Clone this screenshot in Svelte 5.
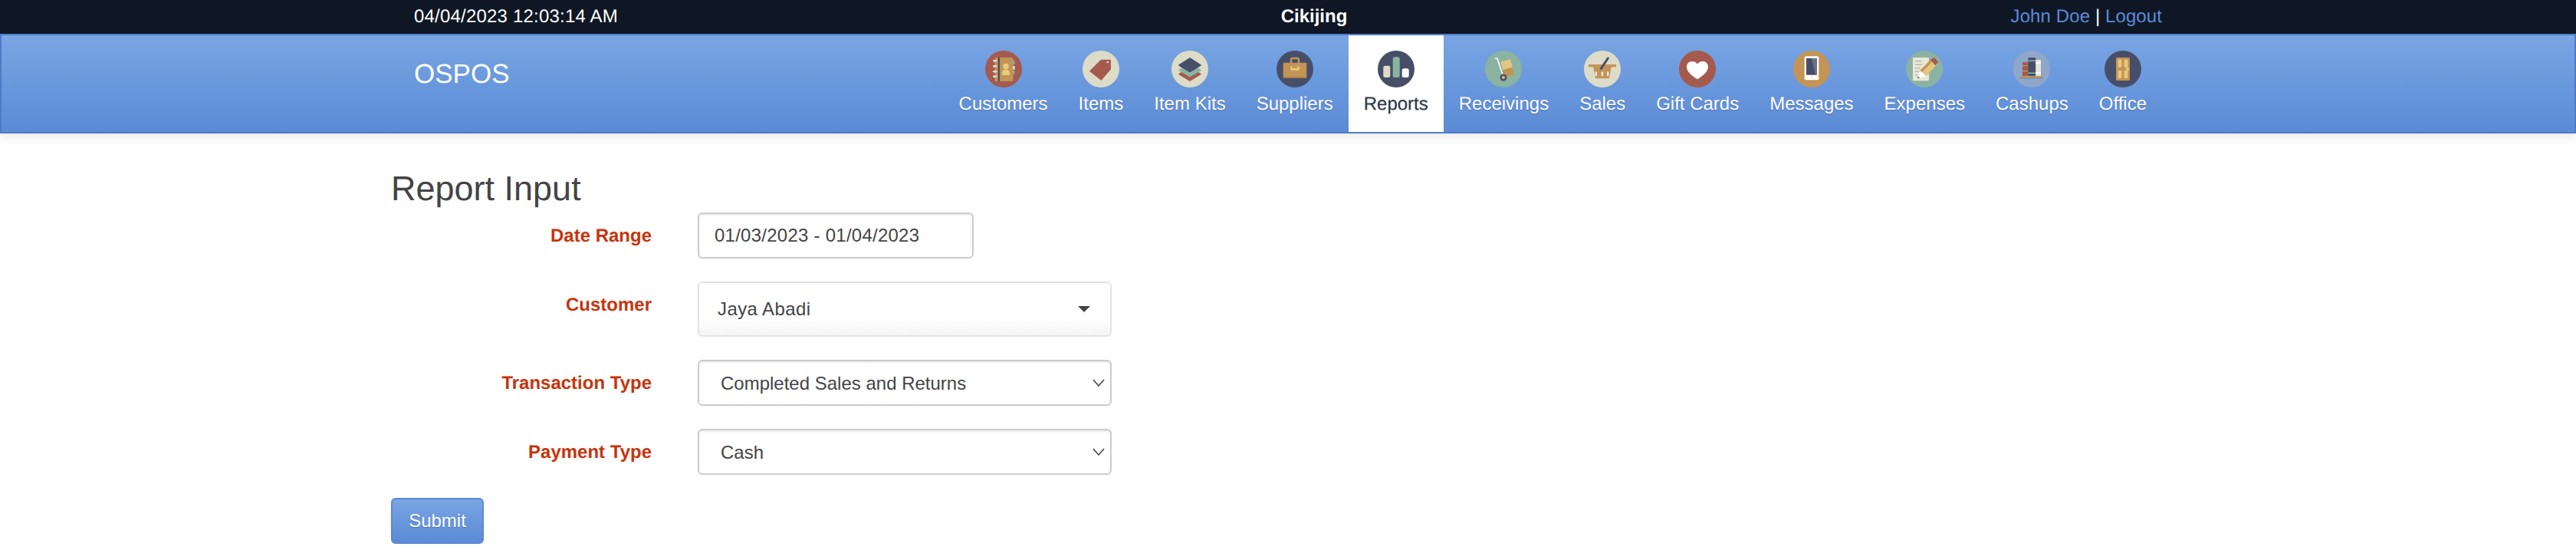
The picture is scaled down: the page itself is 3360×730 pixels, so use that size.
<script>
    const navItems = [
        { key: 'customers', label: 'Customers' },
        { key: 'items', label: 'Items' },
        { key: 'kits', label: 'Item Kits' },
        { key: 'suppliers', label: 'Suppliers' },
        { key: 'reports', label: 'Reports', active: true },
        { key: 'receivings', label: 'Receivings' },
        { key: 'sales', label: 'Sales' },
        { key: 'giftcards', label: 'Gift Cards' },
        { key: 'messages', label: 'Messages' },
        { key: 'expenses', label: 'Expenses' },
        { key: 'cashups', label: 'Cashups' },
        { key: 'office', label: 'Office' }
    ];

    const transactionTypes = ['Completed Sales and Returns'];
    const paymentTypes = ['Cash'];
</script>

<div class="topbar">
    <div class="container bar-row">
        <div class="bar-cell time">04/04/2023 12:03:14 AM</div>
        <div class="bar-cell center"><b>Cikijing</b></div>
        <div class="bar-cell right"><a href="#home">John Doe</a> | <a href="#logout">Logout</a></div>
    </div>
</div>

<nav class="navbar">
    <div class="container nav-row">
        <a class="brand" href="#home">OSPOS</a>
        <ul class="menu">
            {#each navItems as item}
                <li class:active={item.active}>
                    <a href="#{item.key}">
                        <svg class="icon" viewBox="0 0 48 48" width="48" height="48">
                            {#if item.key === 'customers'}
                                <circle cx="24" cy="24" r="24" fill="#a55a4e" />
                                <rect x="36" y="12.700" width="2.500" height="5.300" fill="#7fa8c9" />
                                <rect x="36" y="20" width="2.500" height="4.700" fill="#f2f0e4" />
                                <rect x="36" y="26" width="2.500" height="4.700" fill="#8ab3a2" />
                                <rect x="12.500" y="9" width="24" height="31" rx="2" fill="#c39455" />
                                <rect x="16.700" y="9" width="2.400" height="31" fill="#474f68" />
                                <g fill="#e3dfd0">
                                    <rect x="10" y="12" width="5.500" height="2.400" rx="1" />
                                    <rect x="10" y="19" width="5.500" height="2.400" rx="1" />
                                    <rect x="10" y="26" width="5.500" height="2.400" rx="1" />
                                    <rect x="10" y="32.500" width="5.500" height="2.400" rx="1" />
                                </g>
                                <circle cx="27" cy="20.500" r="3.800" fill="#e8ca7d" />
                                <path d="M22 32c-.6-5 1.500-7.500 5-7.500s5.600 2.500 5 7.500z" fill="#e8ca7d" />
                            {:else if item.key === 'items'}
                                <circle cx="24" cy="24" r="24" fill="#dcdcc8" />
                                <path d="M10 26.700 24.300 12.500H36.200V24L24.300 38z" fill="#a55a4e" stroke="#a55a4e" stroke-width="1.500" stroke-linejoin="round" />
                                <circle cx="32.700" cy="15" r="1.300" fill="#dcdcc8" />
                            {:else if item.key === 'kits'}
                                <circle cx="24" cy="24" r="24" fill="#dcdcc8" />
                                <g stroke-width="1.500" stroke-linejoin="round">
                                    <path d="M24 22 10 30.700 24 39 38 30.700z" fill="#a55a4e" stroke="#a55a4e" />
                                    <path d="M24 16 10 25.500 24 33.500 38 25.500z" fill="#8ab3a2" stroke="#8ab3a2" />
                                    <path d="M24 10 10 19 24 27.500 38 19z" fill="#474f68" stroke="#474f68" />
                                </g>
                            {:else if item.key === 'suppliers'}
                                <circle cx="24" cy="24" r="24" fill="#474f68" />
                                <path d="M19 17v-5a2 2 0 0 1 2-2h6a2 2 0 0 1 2 2v5" fill="none" stroke="#c39455" stroke-width="2.500" />
                                <rect x="8.700" y="15.700" width="30.600" height="20" rx="2" fill="#c39455" />
                                <rect x="8.700" y="34" width="30.600" height="1.700" fill="#a97f47" />
                                <path d="M18 20.700v2.500a2.500 2.500 0 0 0 2.500 2.500h7a2.500 2.500 0 0 0 2.500-2.500v-2.500z" fill="#e8ca7d" />
                                <rect x="20.500" y="20.700" width="7" height="2.300" fill="#c39455" />
                            {:else if item.key === 'reports'}
                                <circle cx="24" cy="24" r="24" fill="#474f68" />
                                <rect x="7.300" y="19.700" width="9" height="15.300" rx="2.500" fill="#dcdcc8" />
                                <rect x="19.700" y="8.300" width="9" height="26.700" rx="2.500" fill="#8ab3a2" />
                                <rect x="31.700" y="23.300" width="9" height="11.700" rx="2.500" fill="#fff" />
                            {:else if item.key === 'receivings'}
                                <circle cx="24" cy="24" r="24" fill="#8ab3a2" />
                                <path d="M12.700 10.200h3.300l7.700 23.400 11-2.600" fill="none" stroke="#fff" stroke-width="1.500" />
                                <rect x="0" y="0" width="13" height="11" fill="#e3c67f" transform="translate(20.300 14.700) rotate(-17)" />
                                <rect x="0" y="0" width="13" height="10" fill="#c39455" transform="translate(22.800 25.500) rotate(-17)" />
                                <circle cx="24" cy="35" r="4.500" fill="#474f68" />
                                <circle cx="24" cy="35" r="2" fill="#e3c67f" />
                            {:else if item.key === 'sales'}
                                <circle cx="24" cy="24" r="24" fill="#dcdcc8" />
                                <path d="M12 20h24l-2.700 14.800a2 2 0 0 1-2 1.500h-14.600a2 2 0 0 1-2-1.500z" fill="#c39455" />
                                <rect x="6" y="18" width="36" height="3.300" fill="#c39455" />
                                <path d="M22.300 23.300 31.300 10" stroke="#474f68" stroke-width="3" stroke-linecap="round" />
                                <g fill="#e8e6d8">
                                    <rect x="14.500" y="27.300" width="2.500" height="6" rx="1.200" />
                                    <rect x="22.700" y="27.300" width="2.500" height="6" rx="1.200" />
                                    <rect x="30" y="27.300" width="2.500" height="6" rx="1.200" />
                                </g>
                            {:else if item.key === 'giftcards'}
                                <circle cx="24" cy="24" r="24" fill="#a55a4e" />
                                <path d="M24 37.300C17 33 10 27.500 10 21c0-4.200 3.200-7 7-7 2.700 0 5.400 1.200 7 3.400 1.600-2.200 4.300-3.400 7-3.400 3.800 0 7 2.800 7 7 0 6.500-7 12-14 16.300z" fill="#fff" />
                            {:else if item.key === 'messages'}
                                <circle cx="24" cy="24" r="24" fill="#c39455" />
                                <rect x="14.700" y="7.300" width="18.600" height="31" rx="2" fill="#fff" />
                                <rect x="17" y="10" width="14" height="21.700" fill="#474f68" />
                                <path d="M24 10h7v21.700h-2z" fill="#6a7288" />
                                <circle cx="24" cy="34.600" r="1.200" fill="#dcdcc8" />
                            {:else if item.key === 'expenses'}
                                <circle cx="24" cy="24" r="24" fill="#8ab3a2" />
                                <rect x="9" y="9" width="21" height="30.300" rx="1" fill="#e8e6d8" />
                                <g fill="#b9b9a6">
                                    <rect x="12" y="13" width="9" height="1.500" />
                                    <rect x="12" y="17.500" width="9" height="1.500" />
                                    <rect x="12" y="22" width="7" height="1.500" />
                                    <rect x="12" y="26.500" width="6" height="1.500" />
                                    <rect x="12" y="31" width="3" height="1.500" />
                                </g>
                                <path d="M18.300 26 33.300 10.700 41.700 16.700 26.700 33.300z" fill="#e3c67f" />
                                <path d="M18.300 26 31.600 12.400 34 14.600 20.700 28.300z" fill="#c39455" />
                                <path d="M31.700 11.700 36.700 9 42.300 15 38.300 19.300z" fill="#a55a4e" />
                                <path d="M18.300 26 26.700 33.300 15.700 36z" fill="#fff" />
                                <path d="M15.300 33.500 18 35.500 15.500 36.200z" fill="#474f68" />
                            {:else if item.key === 'cashups'}
                                <circle cx="24" cy="24" r="24" fill="#8fa7c9" />
                                <rect x="12" y="15" width="7.300" height="18" fill="#a55a4e" />
                                <rect x="12" y="19" width="7.300" height="1.300" fill="#c39455" />
                                <rect x="12" y="26" width="7.300" height="1.300" fill="#c39455" />
                                <rect x="19.300" y="9" width="10" height="24" rx="1.500" fill="#474f68" />
                                <rect x="19.300" y="12.500" width="10" height="1.500" fill="#8ab3a2" />
                                <rect x="19.300" y="28.500" width="10" height="1.500" fill="#8ab3a2" />
                                <rect x="29.300" y="12" width="6.700" height="21" fill="#e8e6d8" />
                                <rect x="29.300" y="15" width="6.700" height="2" fill="#fff" />
                                <rect x="29.300" y="28" width="6.700" height="2" fill="#fff" />
                                <rect x="8.700" y="33" width="30" height="2.500" fill="#c39455" />
                                <rect x="8.700" y="35.500" width="30" height="1" fill="#6f86a8" />
                            {:else}
                                <circle cx="24" cy="24" r="24" fill="#474f68" />
                                <rect x="15" y="9" width="18" height="30" rx="1.500" fill="#c39455" />
                                <g fill="#e8ca7d">
                                    <rect x="17.700" y="11.700" width="4.600" height="10" />
                                    <rect x="25.700" y="11.700" width="4.600" height="10" />
                                    <rect x="17.700" y="26" width="4.600" height="10" />
                                    <rect x="25.700" y="26" width="4.600" height="10" />
                                    <circle cx="30" cy="24" r="2" />
                                </g>
                            {/if}
                        </svg>
                        <span class="label">{item.label}</span>
                    </a>
                </li>
            {/each}
        </ul>
    </div>
</nav>

<main class="container content">
    <h3>Report Input</h3>
    <form class="report-form">
        <div class="form-row">
            <label for="daterange">Date Range</label>
            <input id="daterange" class="control date" type="text" value="01/03/2023 - 01/04/2023" />
        </div>
        <div class="form-row">
            <label for="customer">Customer</label>
            <button id="customer" type="button" class="picker">
                <span>Jaya Abadi</span>
                <span class="caret"></span>
            </button>
        </div>
        <div class="form-row">
            <label for="transaction">Transaction Type</label>
            <div class="select-wrap">
                <select id="transaction" class="control">
                    {#each transactionTypes as t}<option>{t}</option>{/each}
                </select>
                <svg class="chevron" viewBox="0 0 16 10" width="16" height="10"><path d="M1 1l7 8 7-8" fill="none" stroke="#444" stroke-width="1.500" /></svg>
            </div>
        </div>
        <div class="form-row">
            <label for="payment">Payment Type</label>
            <div class="select-wrap">
                <select id="payment" class="control">
                    {#each paymentTypes as t}<option>{t}</option>{/each}
                </select>
                <svg class="chevron" viewBox="0 0 16 10" width="16" height="10"><path d="M1 1l7 8 7-8" fill="none" stroke="#444" stroke-width="1.500" /></svg>
            </div>
        </div>
        <div>
            <button type="button" class="submit">Submit</button>
        </div>
    </form>
</main>

<style>
    :global(body) {
        font-family: "Liberation Sans", Arial, sans-serif;
        font-size: 24px;
        color: #444;
        background: #fff;
        text-rendering: geometricPrecision;
    }

    .container {
        width: 2340px;
        margin: 0 auto;
        box-sizing: border-box;
    }

    .topbar {
        background: #0f1725;
        color: #fff;
        height: 44px;
    }

    .bar-row {
        display: grid;
        grid-template-columns: 800px 748px 1fr;
        padding: 0 30px;
        line-height: 44px;
    }

    .time {
        letter-spacing: 0.2px;
    }

    .center {
        text-align: center;
    }

    .right {
        text-align: right;
        letter-spacing: 0.1px;
    }

    .bar-cell a {
        color: #5b8bd8;
        text-decoration: none;
    }

    .navbar {
        height: 130px;
        box-sizing: border-box;
        border: 2px solid #4f7ac6;
        background: linear-gradient(#79a5e3, #5b8bd6);
        box-shadow: 0 6px 12px rgba(0, 0, 0, 0.075);
    }

    .nav-row {
        display: flex;
        justify-content: space-between;
        padding: 0 30px;
        height: 126px;
    }

    .brand {
        color: #fff;
        font-size: 35px;
        line-height: 40px;
        padding-top: 31px;
        text-decoration: none;
    }

    .menu {
        display: flex;
        list-style: none;
        margin: 0;
        padding: 0;
    }

    .menu a {
        display: flex;
        flex-direction: column;
        align-items: center;
        height: 126px;
        box-sizing: border-box;
        padding: 20px 20px 0;
        color: #fff;
        text-decoration: none;
        text-shadow: 0 1px 1px rgba(0, 0, 0, 0.25);
    }

    .menu .active a {
        background: #fff;
        color: #2c3548;
    }

    .icon {
        display: block;
        margin-bottom: 8px;
    }

    .label {
        line-height: 28px;
    }

    h3 {
        font-size: 45px;
        font-weight: 400;
        line-height: 52px;
        margin: 0 0 5px;
        padding-top: 46px;
    }

    .report-form {
        display: flex;
        flex-direction: column;
        gap: 30px;
    }

    .form-row {
        display: grid;
        grid-template-columns: 340px 540px;
        column-gap: 60px;
        align-items: start;
    }

    label {
        font-weight: 700;
        color: #c7340c;
        text-align: right;
        line-height: 28px;
        padding-top: 17px;
    }

    .control {
        display: block;
        width: 100%;
        height: 60px;
        box-sizing: border-box;
        padding: 0 20px;
        border: 2px solid #ccc;
        border-radius: 6px;
        background: #fff;
        color: #444;
        font: inherit;
        box-shadow: inset 0 2px 2px rgba(0, 0, 0, 0.075);
        outline: none;
    }

    .date {
        width: 360px;
        letter-spacing: 0.25px;
    }

    .select-wrap {
        position: relative;
    }

    select.control {
        appearance: none;
        padding: 0 28px;
    }

    .chevron {
        position: absolute;
        right: 9px;
        top: 25px;
    }

    .picker {
        display: flex;
        align-items: center;
        justify-content: space-between;
        width: 100%;
        height: 72px;
        box-sizing: border-box;
        padding: 0 26px 0 24px;
        border: 2px solid #e4e4e4;
        border-radius: 6px;
        background: linear-gradient(#fff 70%, #f4f4f4);
        color: #444;
        font: inherit;
        letter-spacing: 0.4px;
    }

    .caret {
        width: 0;
        height: 0;
        border-top: 8px solid #444;
        border-left: 8px solid transparent;
        border-right: 8px solid transparent;
    }

    .submit {
        display: block;
        width: 121px;
        height: 60px;
        padding: 0;
        border: 2px solid #5b88d2;
        border-radius: 6px;
        background: linear-gradient(#79a5e3, #5b8bd6);
        color: #fff;
        font: inherit;
        text-shadow: 0 1px 1px rgba(0, 0, 0, 0.25);
    }
</style>
